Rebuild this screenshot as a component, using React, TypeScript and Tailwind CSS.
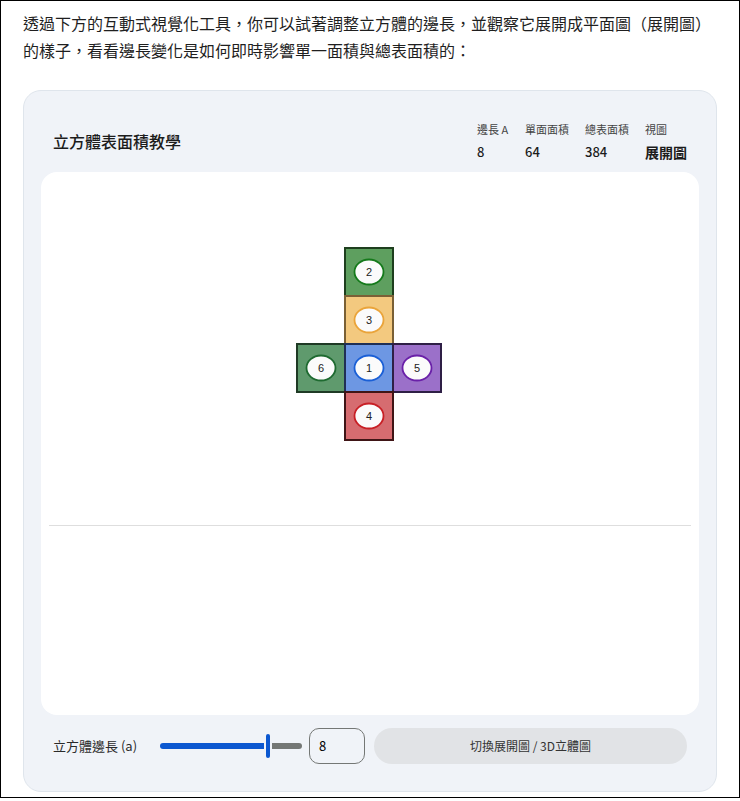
import React, { useState } from 'react';

const font = { fontFamily: '"Noto Sans CJK TC", "Noto Sans", sans-serif' };

type Face = { n: number; x: number; y: number; fill: string; edge: string; ring: string };

const S = 48;
const faces: Face[] = [
  { n: 2, x: 1, y: 0, fill: '#5e9f5f', edge: '#1e3f1e', ring: '#157a1b' },
  { n: 3, x: 1, y: 1, fill: '#f3c97f', edge: '#7a6035', ring: '#eaa43a' },
  { n: 6, x: 0, y: 2, fill: '#5f9a6d', edge: '#1f3a25', ring: '#1e6a30' },
  { n: 1, x: 1, y: 2, fill: '#6d97e3', edge: '#1f2f55', ring: '#1a5fd6' },
  { n: 5, x: 2, y: 2, fill: '#9b70c9', edge: '#2e1f45', ring: '#6a20a8' },
  { n: 4, x: 1, y: 3, fill: '#d66c70', edge: '#3f1516', ring: '#c81f25' },
];

function CubeNet() {
  return (
    <svg width={148} height={196} viewBox="-1 -1 148 196">
      {faces.map((f) => {
        const cx = f.x * S + S / 2;
        const cy = f.y * S + S / 2;
        return (
          <g key={f.n}>
            <rect x={f.x * S} y={f.y * S} width={S} height={S} fill={f.fill} stroke={f.edge} strokeWidth={2} />
            <ellipse cx={cx} cy={cy} rx={14.5} ry={12.5} fill="#fbfbfb" stroke={f.ring} strokeWidth={1.8} />
            <text x={cx} y={cy + 4} textAnchor="middle" fontSize={11} fill="#222" style={{ fontFamily: '"Liberation Sans", sans-serif' }}>
              {f.n}
            </text>
          </g>
        );
      })}
    </svg>
  );
}

export default function App() {
  const [a, setA] = useState(8);

  return (
    <div className="w-[740px] h-[798px] border border-black bg-white overflow-hidden" style={font}>
      <p className="pl-[22px] pr-[14px] pt-[9px] text-[16px] leading-[27px] text-[#1f1f1f]">
        透過下方的互動式視覺化工具，你可以試著調整立方體的邊長，並觀察它展開成平面圖（展開圖）的樣子，看看邊長變化是如何即時影響單一面積與總表面積的：
      </p>

      <div className="mx-[22px] mt-[26px] h-[702px] rounded-[18px] border border-[#dfe5ec] bg-[#f0f3f8] flex flex-col">
        <div className="flex items-center justify-between pl-[29px] pr-[29px] pt-[18px] h-[81px]">
          <h2 className="text-[16px] font-medium text-[#1c1c1c]">立方體表面積教學</h2>
          <div className="flex text-[#1c1c1c]">
            <div className="w-[48px] flex flex-col gap-[8px]">
              <span className="text-[11px] leading-[14px] text-[#444]">邊長 A</span>
              <span className="text-[13px] leading-[16px] font-medium">{a}</span>
            </div>
            <div className="w-[60px] flex flex-col gap-[8px]">
              <span className="text-[11px] leading-[14px] text-[#444]">單面面積</span>
              <span className="text-[13px] leading-[16px] font-medium">{a * a}</span>
            </div>
            <div className="w-[60px] flex flex-col gap-[8px]">
              <span className="text-[11px] leading-[14px] text-[#444]">總表面積</span>
              <span className="text-[13px] leading-[16px] font-medium">{6 * a * a}</span>
            </div>
            <div className="w-[42px] flex flex-col gap-[8px]">
              <span className="text-[11px] leading-[14px] text-[#444]">視圖</span>
              <span className="text-[14px] leading-[16px] font-bold">展開圖</span>
            </div>
          </div>
        </div>

        <div className="mx-[17px] h-[543px] rounded-[16px] bg-white flex flex-col">
          <div className="h-[353px] flex justify-center pt-[75px]">
            <CubeNet />
          </div>
          <div className="mx-[8px] h-px bg-[#dedede]" />
        </div>

        <div className="flex items-center pl-[29px] pr-[29px] mt-[12px] h-[37px]">
          <span className="text-[13px] text-[#2a2a2a] w-[107px]">立方體邊長 (a)</span>
          <div className="flex items-center w-[142px]">
            <div className="h-[6px] w-[104px] rounded-l-full bg-[#0b57d0]" />
            <div className="mx-[2px] h-[24px] w-[4px] rounded-full bg-[#0b57d0]" />
            <div className="h-[6px] w-[30px] rounded-r-full bg-[#747775]" />
          </div>
          <div className="ml-[7px] w-[56px] h-[36px] rounded-[10px] border border-[#747775] flex items-center pl-[9px] text-[13px] text-black">
            {a}
          </div>
          <button
            onClick={() => setA(a)}
            className="ml-[9px] flex-1 h-[36px] rounded-full bg-[#e1e3e6] text-[12px] text-[#333]"
          >
            切換展開圖 / 3D立體圖
          </button>
        </div>
      </div>
    </div>
  );
}
